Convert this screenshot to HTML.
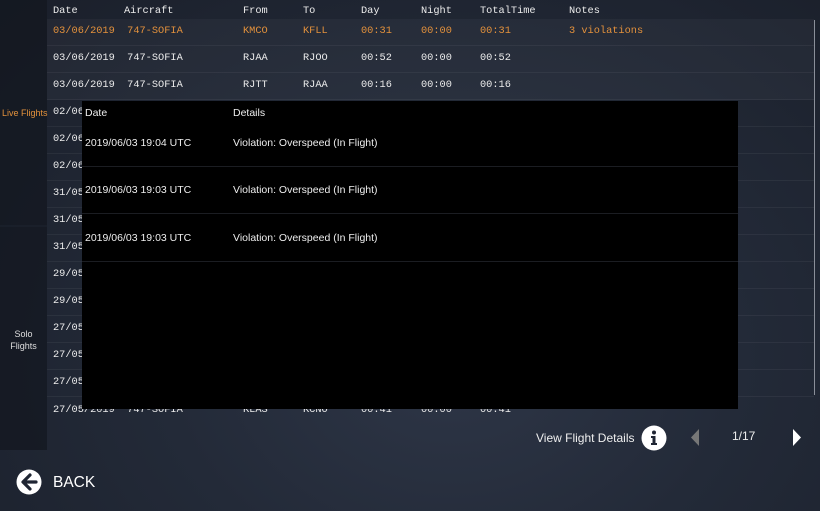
<!DOCTYPE html>
<html><head><style>
*{margin:0;padding:0;box-sizing:border-box}
body{width:820px;height:511px;overflow:hidden;position:relative;background:radial-gradient(ellipse at 55% 70%,#2e3647 0%,#232a38 45%,#1a1f2a 100%);font-family:"Liberation Sans",sans-serif;color:#fff}
.side{position:absolute;left:0;width:47px;background:rgba(20,25,34,.55)}
.m{position:absolute;font-family:"Liberation Mono",monospace;font-size:10.3px;color:#ececec;white-space:pre}
.row{position:absolute;left:47px;width:767px;height:27px;border-bottom:1px solid rgba(255,255,255,.05)}
.or{color:#e3913c}
.ov{position:absolute;left:82px;top:101px;width:656px;height:308px;background:#000}
.ov .t{position:absolute;font-size:10.5px;color:#eee}
.ov .l{position:absolute;left:0;width:656px;height:1px;background:#1b1d22}
</style></head><body>
<div class="side" style="top:0;height:225px"></div>
<div class="side" style="top:227px;height:223px"></div>
<div style="position:absolute;left:0;top:0;width:47px;height:450px;background:rgba(15,19,27,.3)"></div>
<div style="position:absolute;left:2px;top:108px;font-size:9px;color:#e3913c">Live Flights</div>
<div style="position:absolute;left:0;width:47px;top:328px;font-size:9px;color:#ddd;text-align:center;line-height:12px">Solo<br>Flights</div>
<div style="position:absolute;left:47px;top:19px;width:767px;height:81px;background:rgba(255,255,255,.035)"></div>
<div style="position:absolute;left:814px;top:20px;width:1px;height:375px;background:#8a8f99"></div>
<div class="row" style="top:19px"></div><div class="row" style="top:46px"></div><div class="row" style="top:73px"></div>
<div class="row" style="top:100px"></div><div class="row" style="top:127px"></div><div class="row" style="top:154px"></div>
<div class="row" style="top:181px"></div><div class="row" style="top:208px"></div><div class="row" style="top:235px"></div>
<div class="row" style="top:262px"></div><div class="row" style="top:289px"></div><div class="row" style="top:316px"></div>
<div class="row" style="top:343px"></div><div class="row" style="top:370px"></div>
<div class="m" style="left:53px;top:5px">Date</div><div class="m" style="left:124px;top:5px">Aircraft</div><div class="m" style="left:243px;top:5px">From</div><div class="m" style="left:303px;top:5px">To</div><div class="m" style="left:361px;top:5px">Day</div><div class="m" style="left:421px;top:5px">Night</div><div class="m" style="left:480px;top:5px">TotalTime</div><div class="m" style="left:569px;top:5px">Notes</div>
<div class="m or" style="left:53px;top:25px">03/06/2019  747-SOFIA</div><div class="m or" style="left:243px;top:25px">KMCO</div><div class="m or" style="left:303px;top:25px">KFLL</div><div class="m or" style="left:361px;top:25px">00:31</div><div class="m or" style="left:421px;top:25px">00:00</div><div class="m or" style="left:480px;top:25px">00:31</div><div class="m or" style="left:569px;top:25px">3 violations</div>
<div class="m" style="left:53px;top:52px">03/06/2019  747-SOFIA</div><div class="m" style="left:243px;top:52px">RJAA</div><div class="m" style="left:303px;top:52px">RJOO</div><div class="m" style="left:361px;top:52px">00:52</div><div class="m" style="left:421px;top:52px">00:00</div><div class="m" style="left:480px;top:52px">00:52</div>
<div class="m" style="left:53px;top:79px">03/06/2019  747-SOFIA</div><div class="m" style="left:243px;top:79px">RJTT</div><div class="m" style="left:303px;top:79px">RJAA</div><div class="m" style="left:361px;top:79px">00:16</div><div class="m" style="left:421px;top:79px">00:00</div><div class="m" style="left:480px;top:79px">00:16</div>
<div class="m" style="left:53px;top:106px">02/06</div><div class="m" style="left:53px;top:133px">02/06</div><div class="m" style="left:53px;top:160px">02/06</div><div class="m" style="left:53px;top:187px">31/05</div><div class="m" style="left:53px;top:214px">31/05</div><div class="m" style="left:53px;top:241px">31/05</div><div class="m" style="left:53px;top:268px">29/05</div><div class="m" style="left:53px;top:295px">29/05</div><div class="m" style="left:53px;top:322px">27/05</div><div class="m" style="left:53px;top:349px">27/05</div><div class="m" style="left:53px;top:376px">27/05</div>
<div class="m" style="left:53px;top:404px">27/05/2019  747-SOFIA</div><div class="m" style="left:243px;top:404px">KLAS</div><div class="m" style="left:303px;top:404px">KCNO</div><div class="m" style="left:361px;top:404px">00:41</div><div class="m" style="left:421px;top:404px">00:00</div><div class="m" style="left:480px;top:404px">00:41</div>
<div class="ov">
<div class="t" style="left:3px;top:6px">Date</div><div class="t" style="left:151px;top:6px">Details</div>
<div class="t" style="left:3px;top:36px">2019/06/03 19:04 UTC</div><div class="t" style="left:151px;top:36px">Violation: Overspeed (In Flight)</div>
<div class="l" style="top:65px"></div>
<div class="t" style="left:3px;top:83px">2019/06/03 19:03 UTC</div><div class="t" style="left:151px;top:83px">Violation: Overspeed (In Flight)</div>
<div class="l" style="top:112px"></div>
<div class="t" style="left:3px;top:131px">2019/06/03 19:03 UTC</div><div class="t" style="left:151px;top:131px">Violation: Overspeed (In Flight)</div>
<div class="l" style="top:160px"></div>
</div>
<svg style="position:absolute;left:16px;top:469px" width="26" height="26" viewBox="0 0 26 26"><circle cx="13" cy="13" r="12.5" fill="#fff"/><path d="M14 6 L7 13 L14 20 M7.5 13 H20" stroke="#1f2533" stroke-width="3.2" fill="none" stroke-linecap="round" stroke-linejoin="round"/></svg>
<div style="position:absolute;left:53px;top:474px;font-size:15.5px">BACK</div>
<div style="position:absolute;left:536px;top:431px;font-size:12px;color:#eee">View Flight Details</div>
<svg style="position:absolute;left:641px;top:425px" width="26" height="26" viewBox="0 0 26 26"><circle cx="13" cy="13" r="12.5" fill="#fff"/><circle cx="13" cy="7.5" r="2" fill="#1f2533"/><path d="M10 11 H14.5 V18 H16 V20 H10 V18 H11.5 V13 H10 Z" fill="#1f2533"/></svg>
<svg style="position:absolute;left:690px;top:429px" width="10" height="17"><path d="M9 0 L1 8.5 L9 17 Z" fill="#777"/></svg>
<div style="position:absolute;left:732px;top:429px;font-size:12px;color:#eee">1/17</div>
<svg style="position:absolute;left:792px;top:429px" width="10" height="17"><path d="M1 0 L9 8.5 L1 17 Z" fill="#fff"/></svg>
</body></html>
